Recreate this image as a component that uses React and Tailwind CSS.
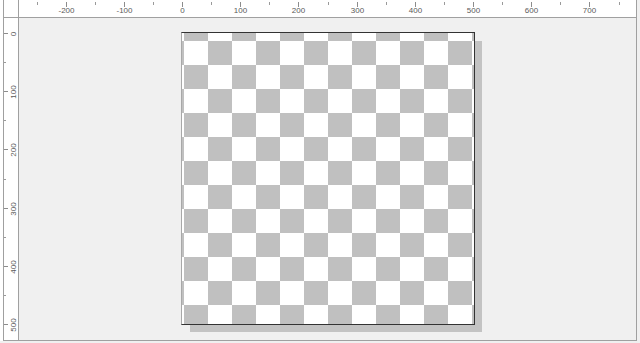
import React from 'react';

// ruler scale: 500 image units span 291px
const SCALE = 0.582;

const TopRuler = () => {
    const ticks = [];
    for (let v = -250; v <= 750; v += 50) ticks.push(v);

    return (
        <div className="relative flex-1 h-[18px] bg-white border-b border-[#a0a0a0] overflow-hidden">
            {ticks.map((v) => {
                const x = Math.round(163 + SCALE * v);
                const major = v % 100 === 0;
                return (
                    <React.Fragment key={v}>
                        <div
                            className={major ? 'absolute top-[2px] w-px h-[5px] bg-[#8c8c8c]' : 'absolute top-[2px] w-px h-[3px] bg-[#9a9a9a]'}
                            style={{ left: x }}
                        />
                        {major && (
                            <span
                                className="absolute top-[6px] -translate-x-1/2 text-[8px] leading-[10px] text-[#5a5a5a] whitespace-nowrap"
                                style={{ left: x + 0.5 }}
                            >
                                {v}
                            </span>
                        )}
                    </React.Fragment>
                );
            })}
        </div>
    );
};

const LeftRuler = () => {
    const ticks = [];
    for (let v = 0; v <= 500; v += 50) ticks.push(v);

    return (
        <div className="relative w-[15px] shrink-0 bg-white border-r border-[#a0a0a0] overflow-hidden">
            {ticks.map((v) => {
                const y = Math.round(15 + SCALE * v);
                const major = v % 100 === 0;
                return (
                    <React.Fragment key={v}>
                        <div
                            className={major ? 'absolute left-0 h-px w-[4px] bg-[#8c8c8c]' : 'absolute left-0 h-px w-[2px] bg-[#9a9a9a]'}
                            style={{ top: y }}
                        />
                        {major && (
                            <span
                                className="absolute left-[10px] -translate-x-1/2 -translate-y-1/2 -rotate-90 text-[8px] leading-[10px] text-[#5a5a5a] whitespace-nowrap"
                                style={{ top: y + 0.5 }}
                            >
                                {v}
                            </span>
                        )}
                    </React.Fragment>
                );
            })}
        </div>
    );
};

const Checker = () => (
    <svg width="292" height="291" className="block">
        <defs>
            <pattern id="chk" x="-22" y="-16" width="48" height="48" patternUnits="userSpaceOnUse">
                <rect width="48" height="48" fill="#ffffff" />
                <rect x="24" y="0" width="24" height="24" fill="#c0c0c0" />
                <rect x="0" y="24" width="24" height="24" fill="#c0c0c0" />
            </pattern>
        </defs>
        <rect width="292" height="291" fill="url(#chk)" />
    </svg>
);

export default function App() {
    return (
        <div className="w-[640px] h-[343px] bg-[#f0f0f0] flex font-['Liberation_Sans',Arial,sans-serif] overflow-hidden">
            <div className="w-[3px] h-[341px] bg-white" />
            <div className="w-[634px] h-[341px] flex flex-col border-l border-r border-b border-[#a0a0a0]">
                {/* Top ruler row */}
                <div className="flex">
                    <div className="w-[15px] shrink-0 h-[18px] bg-white border-r border-b border-[#a0a0a0]" />
                    <TopRuler />
                </div>

                {/* Left ruler + viewport */}
                <div className="flex flex-1">
                    <LeftRuler />
                    <div className="flex-1 bg-[#f0f0f0] pl-[162px] pt-[14px]">
                        <div className="w-[294px] h-[293px] bg-white border-l border-l-[#a8a8a8] border-t border-r border-b border-[#333333] shadow-[8px_8px_0_-1px_#c3c3c3]">
                            <Checker />
                        </div>
                    </div>
                </div>
            </div>
        </div>
    );
}
